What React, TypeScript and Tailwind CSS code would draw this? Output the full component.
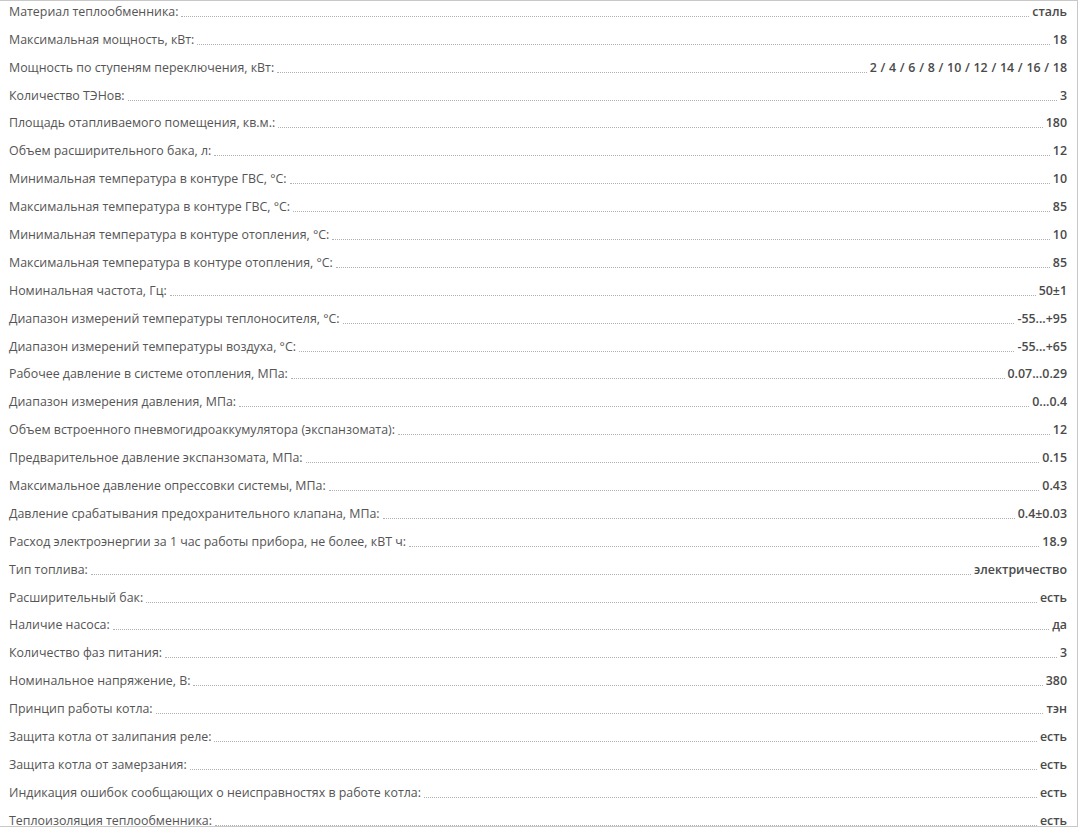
const specs: [string, string][] = [
  ["Материал теплообменника:", "сталь"],
  ["Максимальная мощность, кВт:", "18"],
  ["Мощность по ступеням переключения, кВт:", "2 / 4 / 6 / 8 / 10 / 12 / 14 / 16 / 18"],
  ["Количество ТЭНов:", "3"],
  ["Площадь отапливаемого помещения, кв.м.:", "180"],
  ["Объем расширительного бака, л:", "12"],
  ["Минимальная температура в контуре ГВС, °С:", "10"],
  ["Максимальная температура в контуре ГВС, °С:", "85"],
  ["Минимальная температура в контуре отопления, °С:", "10"],
  ["Максимальная температура в контуре отопления, °С:", "85"],
  ["Номинальная частота, Гц:", "50±1"],
  ["Диапазон измерений температуры теплоносителя, °С:", "-55...+95"],
  ["Диапазон измерений температуры воздуха, °С:", "-55...+65"],
  ["Рабочее давление в системе отопления, МПа:", "0.07...0.29"],
  ["Диапазон измерения давления, МПа:", "0...0.4"],
  ["Объем встроенного пневмогидроаккумулятора (экспанзомата):", "12"],
  ["Предварительное давление экспанзомата, МПа:", "0.15"],
  ["Максимальное давление опрессовки системы, МПа:", "0.43"],
  ["Давление срабатывания предохранительного клапана, МПа:", "0.4±0.03"],
  ["Расход электроэнергии за 1 час работы прибора, не более, кВТ ч:", "18.9"],
  ["Тип топлива:", "электричество"],
  ["Расширительный бак:", "есть"],
  ["Наличие насоса:", "да"],
  ["Количество фаз питания:", "3"],
  ["Номинальное напряжение, В:", "380"],
  ["Принцип работы котла:", "тэн"],
  ["Защита котла от залипания реле:", "есть"],
  ["Защита котла от замерзания:", "есть"],
  ["Индикация ошибок сообщающих о неисправностях в работе котла:", "есть"],
  ["Теплоизоляция теплообменника:", "есть"],
];

function SpecRow({ label, value }: { label: string; value: string }) {
  return (
    <li className="flex items-end h-[27.9px] shrink-0">
      <span className="whitespace-nowrap leading-[20px] text-[#555]">{label}</span>
      <span className="flex-1 mx-[3px] mb-[5px] border-b border-dotted border-[#b0b0b0]" />
      <span className="whitespace-nowrap leading-[20px] font-semibold text-[#4a4a4a] [word-spacing:0.5px]">{value}</span>
    </li>
  );
}

export default function App() {
  return (
    <div className="w-[1078px] h-[828px] bg-white overflow-hidden" style={{ fontFamily: '"Open Sans", "Noto Sans", sans-serif' }}>
      <div className="h-[827px] border-t border-r border-b border-[#c8c8c8] overflow-hidden">
        <ul className="flex flex-col pl-[9px] pr-[10px] -mt-[7px] text-[12.4px]">
          {specs.map(([label, value]) => (
            <SpecRow key={label} label={label} value={value} />
          ))}
        </ul>
      </div>
    </div>
  );
}
